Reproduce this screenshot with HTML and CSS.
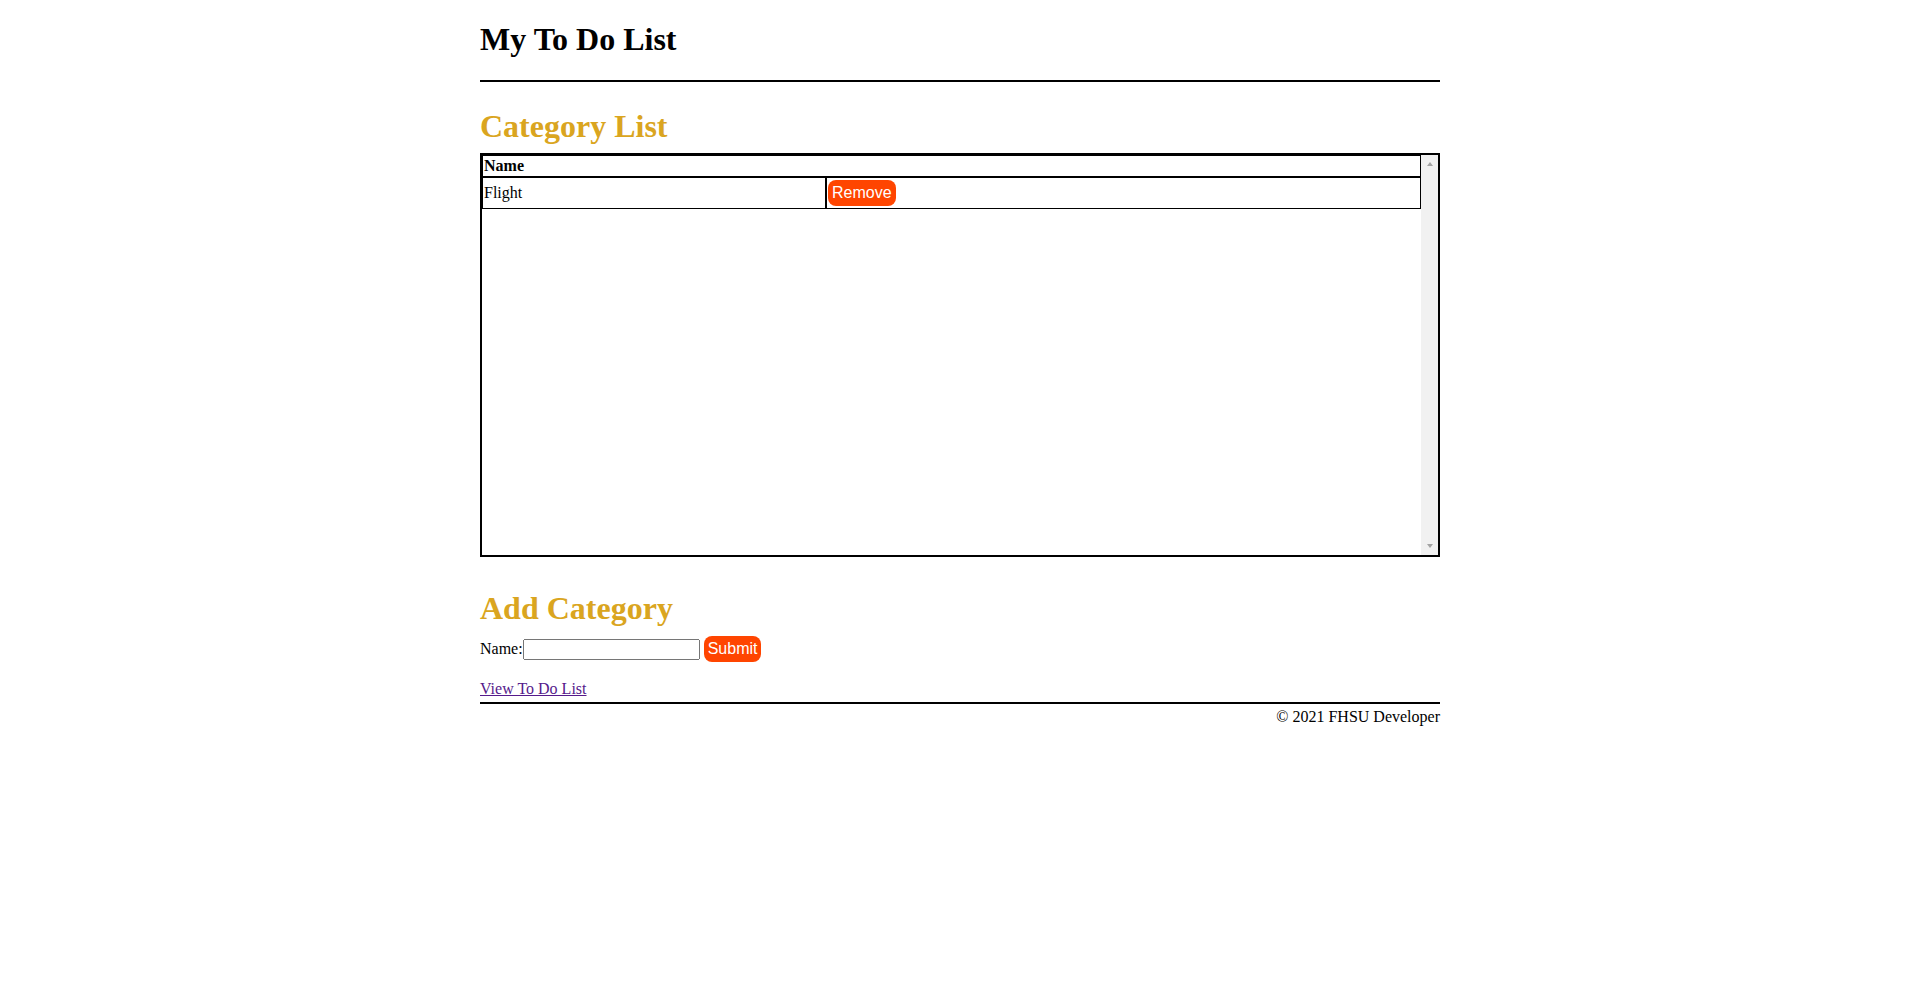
FILE: index.html
```html
<!DOCTYPE html>
<html lang="en">
<head>
<meta charset="utf-8">
<title>My To Do List</title>
<link rel="stylesheet" href="styles.css">
</head>
<body>
<div class="page">
  <header class="site-header">
    <h1 class="site-title">My To Do List</h1>
    <hr class="rule">
  </header>
  <main>
    <h2 class="section-title list-title">Category List</h2>
    <div class="table-box">
      <div class="table-scroll">
        <table class="cat-table">
          <thead>
            <tr><th colspan="2">Name</th></tr>
          </thead>
          <tbody>
            <tr>
              <td class="name-cell">Flight</td>
              <td><button class="btn" type="button">Remove</button></td>
            </tr>
          </tbody>
        </table>
      </div>
      <div class="scrollbar" aria-hidden="true">
        <span class="arrow arrow-up"></span>
        <span class="arrow arrow-down"></span>
      </div>
    </div>
    <h2 class="section-title add-title">Add Category</h2>
    <form class="add-form" onsubmit="return false;">
      <label for="cat-name">Name:</label><input id="cat-name" class="text-input" type="text"> <button class="btn" type="submit">Submit</button>
    </form>
    <p class="nav"><a class="nav-link" href="#">View To Do List</a></p>
  </main>
  <footer class="site-footer">
    <hr class="rule">
    <p class="copyright">&copy; 2021 FHSU Developer</p>
  </footer>
</div>
</body>
</html>
```

FILE: styles.css
```css
html, body {
  margin: 0;
  padding: 0;
  background: #ffffff;
}

body {
  font-family: "Liberation Serif", "Times New Roman", serif;
  font-size: 16px;
  color: #000000;
}

.page {
  width: 960px;
  margin: 0 auto;
}

.site-title {
  font-size: 32px;
  font-weight: bold;
  margin: 21.44px 0;
}

.rule {
  border: 0;
  border-top: 2px solid #000000;
  height: 0;
  margin: 0;
}

.section-title {
  font-size: 32px;
  font-weight: bold;
  color: #daa520;
}

.list-title {
  margin: 26px 0 8px;
}

.add-title {
  margin: 33px 0 0;
}

.table-box {
  height: 400px;
  border: 2px solid #000000;
  display: flex;
}

.table-scroll {
  flex: 1;
  min-width: 0;
  overflow: hidden;
}

.scrollbar {
  width: 17px;
  flex: none;
  background: #f1f1f1;
  display: flex;
  flex-direction: column;
  justify-content: space-between;
  align-items: center;
  padding: 7px 0;
  box-sizing: border-box;
}

.arrow {
  width: 0;
  height: 0;
  border-left: 3.5px solid transparent;
  border-right: 3.5px solid transparent;
}

.arrow-up {
  border-bottom: 4px solid #a3a3a3;
}

.arrow-down {
  border-top: 4px solid #a3a3a3;
}

.cat-table {
  width: 100%;
  border-collapse: separate;
  border-spacing: 0;
}

.cat-table th,
.cat-table td {
  border: 1px solid #000000;
  padding: 1px;
  text-align: left;
}

.cat-table td {
  padding: 2px 1px;
}

.cat-table .name-cell {
  width: 340px;
}

.btn {
  font-family: "Liberation Sans", Arial, sans-serif;
  font-size: 16px;
  color: #ffffff;
  background: #ff4500;
  border: none;
  border-radius: 8px;
  padding: 4px;
  margin: 0;
  cursor: pointer;
}

.add-form {
  margin: 9px 0 0;
}

.text-input {
  box-sizing: border-box;
  width: 177px;
  height: 21px;
  margin: 0;
}

.nav {
  margin: 18px 0 4px;
}

.nav-link {
  color: #551a8b;
}

.copyright {
  margin: 4px 0 0;
  text-align: right;
}
```
